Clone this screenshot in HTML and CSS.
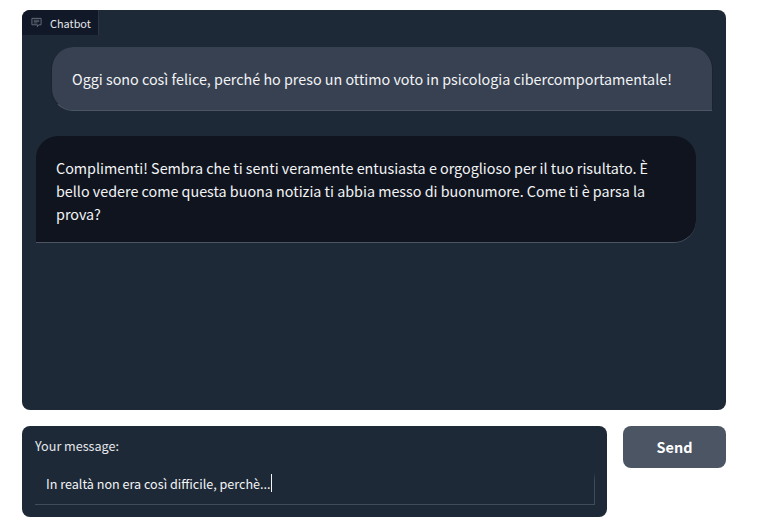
FILE: index.html

```html
<!DOCTYPE html>
<html lang="en">
<head>
    <meta charset="UTF-8">
    <meta name="viewport" content="width=device-width, initial-scale=1.0">
    <title>Chatbot</title>
    <link rel="stylesheet" href="styles.css">
</head>
<body>
    <div class="chat-panel">
        <div class="tab-label">
            <svg class="tab-icon" viewBox="0 0 12 12" width="11" height="11" fill="none" stroke="currentColor" stroke-width="1">
                <path d="M1 1.500h10v7h-2.500l-1.500 2v-2h-6z"/>
                <path d="M3 3.500h6M3 5h6M3 6.500h4" stroke-width="0.8"/>
            </svg>
            <span>Chatbot</span>
        </div>
        <div class="messages">
            <div class="bubble user">Oggi sono così felice, perché ho preso un ottimo voto in psicologia cibercomportamentale!</div>
            <div class="bubble bot">Complimenti! Sembra che ti senti veramente entusiasta e orgoglioso per il tuo risultato. È bello vedere come questa buona notizia ti abbia messo di buonumore. Come ti è parsa la prova?</div>
        </div>
    </div>
    <div class="input-row">
        <div class="input-panel">
            <label class="input-label" for="message">Your message:</label>
            <div class="input-box" id="message"><span>In realtà non era così difficile, perchè...</span><span class="caret"></span></div>
        </div>
        <button class="send-button">Send</button>
    </div>
</body>
</html>
```

FILE: styles.css

```css
body {
    font-family: "Noto Sans CJK SC", "Noto Sans", sans-serif;
    margin: 0;
    padding: 10px 31px 0 22px;
    background-color: #ffffff;
    color: #f3f4f6;
    font-size: 14.33px;
}
.chat-panel {
    height: 400px;
    background-color: #1e2937;
    border-radius: 8px;
    overflow: hidden;
}
.tab-label {
    display: flex;
    align-items: center;
    gap: 8px;
    width: 77px;
    height: 25px;
    box-sizing: border-box;
    padding-left: 9px;
    background-color: #111827;
    border-right: 1px solid #2b3544;
    font-size: 10.9px;
    color: #e5e7eb;
}
.tab-icon {
    color: #6b7280;
}
.messages {
    display: flex;
    flex-direction: column;
    gap: 25px;
    padding: 12px 13px 0 14px;
}
.bubble {
    box-sizing: border-box;
    line-height: 23px;
    border-radius: 22px;
    border-bottom: 1px solid #4b5563;
}
.user {
    align-self: flex-end;
    width: 662px;
    height: 64px;
    padding: 20px 20px 0 20px;
    background-color: #374151;
    border-left: 1px solid #1a2330;
    border-right: 1px solid #1a2330;
    border-bottom-right-radius: 0;
}
.bot {
    width: 660px;
    height: 107px;
    padding: 20px 20px 0 20px;
    background-color: #10141f;
    border-bottom-left-radius: 0;
}
.input-row {
    display: flex;
    align-items: flex-start;
    gap: 16px;
    margin-top: 16px;
}
.input-panel {
    width: 585px;
    height: 91px;
    box-sizing: border-box;
    padding: 11px 12px 0 13px;
    background-color: #1e2937;
    border-radius: 8px;
}
.input-label {
    display: block;
    font-size: 12.6px;
    line-height: 18px;
    color: #e5e7eb;
}
.input-box {
    display: flex;
    align-items: center;
    height: 42px;
    margin-top: 7px;
    padding-left: 11px;
    font-size: 12.6px;
    border-style: solid;
    border-width: 0 1px 1px 0;
    border-image: linear-gradient(to bottom, transparent 25%, #414c5a 45%) 1;
}
.caret {
    width: 1px;
    height: 18px;
    background-color: #f3f4f6;
}
.send-button {
    width: 103px;
    height: 42px;
    padding: 0 0 2px;
    background-color: #4b5563;
    color: #ffffff;
    border: none;
    border-radius: 8px;
    font-family: inherit;
    font-size: 14.4px;
    font-weight: 700;
}
```
